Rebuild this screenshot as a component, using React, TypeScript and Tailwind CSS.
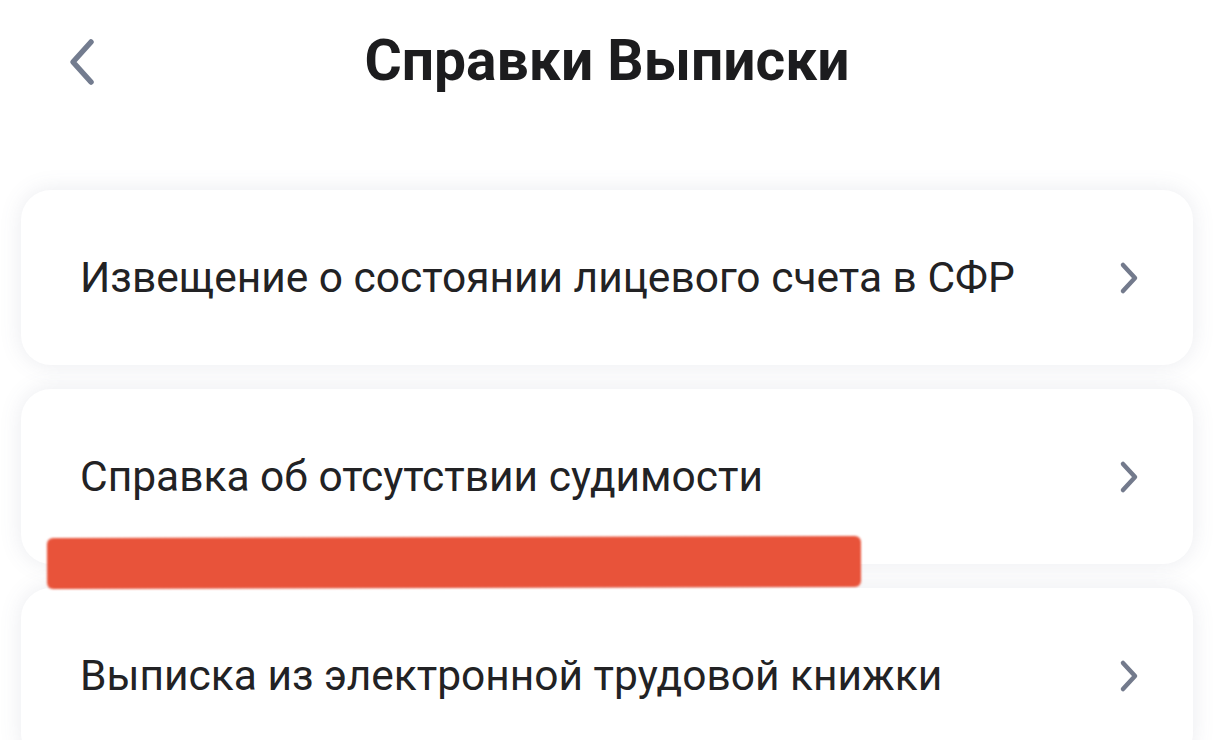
import React from "react";

// ---------- Icons ----------
const ChevronLeft = () => (
  <svg width="40" height="52" viewBox="0 0 40 52" fill="none" className="block">
    <path d="M31 6 L13 26 L31 46" stroke="#737c8f" strokeWidth="5.5" strokeLinecap="round" strokeLinejoin="round" />
  </svg>
);

const ChevronRight = () => (
  <svg width="24" height="34" viewBox="0 0 24 34" fill="none" className="block">
    <path d="M6 4 L18 17 L6 30" stroke="#737a8c" strokeWidth="4.5" strokeLinecap="round" strokeLinejoin="round" />
  </svg>
);

// ---------- Row ----------
const Row = ({ title }: { title: string }) => (
  <div className="h-[175px] rounded-[30px] bg-white shadow-[0_0_22px_rgba(90,100,135,0.13)] flex items-center pl-[59px] pr-[52px]">
    <div className="flex-1 text-[42.5px] leading-none text-[#222224] pt-[2px]">{title}</div>
    <ChevronRight />
  </div>
);

export default function App() {
  const items = [
    "Извещение о состоянии лицевого счета в СФР",
    "Справка об отсутствии судимости",
    "Выписка из электронной трудовой книжки",
  ];

  return (
    <div className="relative h-[740px] w-[1214px] overflow-hidden bg-white" style={{ fontFamily: "Roboto, 'Noto Sans', sans-serif" }}>
      {/* header */}
      <div className="relative h-[124px] flex items-center justify-center">
        <div className="absolute left-[60px] top-[36px]"><ChevronLeft /></div>
        <div className="text-[57px] font-bold text-[#1c1c1e] leading-none -mt-[4px]">Справки Выписки</div>
      </div>

      {/* list */}
      <div className="mt-[66px] px-[21px] flex flex-col gap-[24px]">
        {items.map((t) => (
          <Row key={t} title={t} />
        ))}
      </div>

      {/* red marker stroke */}
      <div className="absolute left-[47px] top-[537px] h-[51px] w-[814px] rounded-[6px] bg-[#e8533a] blur-[0.8px] -rotate-[0.15deg]" />
    </div>
  );
}
